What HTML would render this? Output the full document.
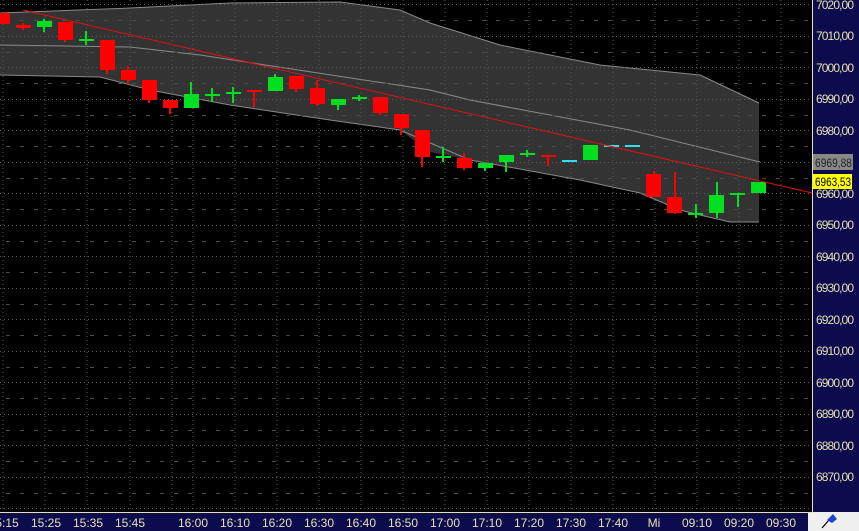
<!DOCTYPE html>
<html><head><style>
html,body{margin:0;padding:0;background:#000;}
svg{display:block;font-family:"Liberation Sans",sans-serif;}
</style></head><body>
<svg width="859" height="531" xmlns="http://www.w3.org/2000/svg">
<rect width="859" height="531" fill="#000"/>
<polygon fill="#333333" points="0,13 130,8 230,3 340,2 400,10 430,23 500,45 600,65 700,75 759,103 759,222 730,222 700,215 680,210 640,193 580,180 470,160 430,152 400,130 330,120 230,105 150,90 100,77 0,75"/>
<polyline fill="none" stroke="#8a8a8a" stroke-width="1" points="0,13 130,8 230,3 340,2 400,10 430,23 500,45 600,65 700,75 759,103"/>
<polyline fill="none" stroke="#8a8a8a" stroke-width="1" points="0,75 100,77 150,90 230,105 330,120 400,130 470,160 580,180 640,193 680,210 700,215 730,222 759,222"/>
<polyline fill="none" stroke="#8a8a8a" stroke-width="1" points="0,45 130,47 200,55 430,90 470,100 630,130 760,162"/>
<g stroke="#5a5a5a" stroke-width="1" stroke-dasharray="1,3">
<line x1="3" y1="0" x2="3" y2="512"/><line x1="45" y1="0" x2="45" y2="512"/><line x1="87" y1="0" x2="87" y2="512"/><line x1="130" y1="0" x2="130" y2="512"/><line x1="172" y1="0" x2="172" y2="512"/><line x1="193" y1="0" x2="193" y2="512"/><line x1="235" y1="0" x2="235" y2="512"/><line x1="277" y1="0" x2="277" y2="512"/><line x1="319" y1="0" x2="319" y2="512"/><line x1="361" y1="0" x2="361" y2="512"/><line x1="403" y1="0" x2="403" y2="512"/><line x1="445" y1="0" x2="445" y2="512"/><line x1="487" y1="0" x2="487" y2="512"/><line x1="529" y1="0" x2="529" y2="512"/><line x1="571" y1="0" x2="571" y2="512"/><line x1="613" y1="0" x2="613" y2="512"/><line x1="655" y1="0" x2="655" y2="512"/><line x1="697" y1="0" x2="697" y2="512"/><line x1="739" y1="0" x2="739" y2="512"/><line x1="781" y1="0" x2="781" y2="512"/>
</g>
<g stroke="#5a5a5a" stroke-width="1">
<g stroke-dasharray="1,3">
<line x1="0" y1="4.5" x2="812" y2="4.5"/><line x1="0" y1="36.5" x2="812" y2="36.5"/><line x1="0" y1="67.5" x2="812" y2="67.5"/><line x1="0" y1="99.5" x2="812" y2="99.5"/><line x1="0" y1="130.5" x2="812" y2="130.5"/><line x1="0" y1="162.5" x2="812" y2="162.5"/><line x1="0" y1="193.5" x2="812" y2="193.5"/><line x1="0" y1="225.5" x2="812" y2="225.5"/><line x1="0" y1="256.5" x2="812" y2="256.5"/><line x1="0" y1="288.5" x2="812" y2="288.5"/><line x1="0" y1="319.5" x2="812" y2="319.5"/><line x1="0" y1="351.5" x2="812" y2="351.5"/><line x1="0" y1="382.5" x2="812" y2="382.5"/><line x1="0" y1="414.5" x2="812" y2="414.5"/><line x1="0" y1="445.5" x2="812" y2="445.5"/><line x1="0" y1="477.5" x2="812" y2="477.5"/><line x1="0" y1="508.5" x2="812" y2="508.5"/>
</g>
<g stroke-dasharray="4,10" stroke="#4a4a4a">
<line x1="6" y1="20.5" x2="812" y2="20.5"/><line x1="6" y1="52.5" x2="812" y2="52.5"/><line x1="6" y1="83.5" x2="812" y2="83.5"/><line x1="6" y1="115.5" x2="812" y2="115.5"/><line x1="6" y1="146.5" x2="812" y2="146.5"/><line x1="6" y1="178.5" x2="812" y2="178.5"/><line x1="6" y1="209.5" x2="812" y2="209.5"/><line x1="6" y1="241.5" x2="812" y2="241.5"/><line x1="6" y1="272.5" x2="812" y2="272.5"/><line x1="6" y1="304.5" x2="812" y2="304.5"/><line x1="6" y1="335.5" x2="812" y2="335.5"/><line x1="6" y1="367.5" x2="812" y2="367.5"/><line x1="6" y1="398.5" x2="812" y2="398.5"/><line x1="6" y1="430.5" x2="812" y2="430.5"/><line x1="6" y1="461.5" x2="812" y2="461.5"/><line x1="6" y1="493.5" x2="812" y2="493.5"/>
</g>
</g>
<g stroke-width="2">
<g fill="#ff0000" stroke="#ff0000">
<rect x="0" y="13" width="10" height="11" stroke="none"/>
<line x1="23" y1="23" x2="23" y2="30"/><rect x="16" y="25" width="15" height="3" stroke="none"/>
<rect x="58" y="22" width="15" height="18" stroke="none"/><line x1="65" y1="40" x2="65" y2="42"/>
<rect x="100" y="40" width="15" height="30" stroke="none"/><line x1="107" y1="70" x2="107" y2="74"/>
<rect x="121" y="70" width="15" height="10" stroke="none"/><line x1="128" y1="66" x2="128" y2="83"/>
<rect x="142" y="80" width="15" height="20" stroke="none"/><line x1="149" y1="100" x2="149" y2="103"/>
<rect x="163" y="100" width="15" height="8" stroke="none"/><line x1="170" y1="108" x2="170" y2="114"/>
<line x1="247" y1="91" x2="262" y2="91"/><line x1="254" y1="91" x2="254" y2="107"/>
<rect x="289" y="76" width="15" height="13" stroke="none"/><line x1="296" y1="89" x2="296" y2="92"/>
<rect x="310" y="88" width="15" height="16" stroke="none"/><line x1="317" y1="80" x2="317" y2="106"/>
<rect x="373" y="97" width="15" height="16" stroke="none"/><line x1="380" y1="113" x2="380" y2="115"/>
<rect x="394" y="114" width="15" height="14" stroke="none"/><line x1="401" y1="128" x2="401" y2="135"/>
<rect x="415" y="130" width="15" height="27" stroke="none"/><line x1="422" y1="157" x2="422" y2="167"/>
<rect x="457" y="158" width="15" height="10" stroke="none"/><line x1="464" y1="153" x2="464" y2="170"/>
<line x1="541" y1="156" x2="556" y2="156"/><line x1="548" y1="156" x2="548" y2="166"/>
<rect x="646" y="174" width="15" height="23" stroke="none"/><line x1="654" y1="171" x2="654" y2="197"/>
<rect x="667" y="197" width="15" height="16" stroke="none"/><line x1="675" y1="172" x2="675" y2="214"/>
</g>
<g fill="#00e020" stroke="#00e020">
<rect x="37" y="21" width="15" height="6" stroke="none"/><line x1="44" y1="19" x2="44" y2="32"/>
<line x1="79" y1="40" x2="94" y2="40"/><line x1="86" y1="31" x2="86" y2="45"/>
<rect x="184" y="94" width="15" height="14" stroke="none"/><line x1="191" y1="82" x2="191" y2="94"/>
<line x1="205" y1="95" x2="220" y2="95"/><line x1="212" y1="88" x2="212" y2="102"/>
<line x1="226" y1="93" x2="241" y2="93"/><line x1="233" y1="87" x2="233" y2="103"/>
<rect x="268" y="77" width="15" height="14" stroke="none"/><line x1="275" y1="74" x2="275" y2="77"/>
<rect x="331" y="99" width="15" height="6" stroke="none"/><line x1="338" y1="105" x2="338" y2="110"/>
<line x1="352" y1="98" x2="367" y2="98"/><line x1="359" y1="95" x2="359" y2="101"/>
<line x1="436" y1="157" x2="451" y2="157"/><line x1="443" y1="147" x2="443" y2="162"/>
<rect x="478" y="163" width="15" height="5" stroke="none"/><line x1="485" y1="163" x2="485" y2="171"/>
<rect x="499" y="155" width="15" height="7" stroke="none"/><line x1="506" y1="162" x2="506" y2="172"/>
<line x1="520" y1="154" x2="535" y2="154"/><line x1="527" y1="150" x2="527" y2="157"/>
<rect x="583" y="145" width="15" height="15" stroke="none"/>
<line x1="688" y1="214" x2="703" y2="214"/><line x1="696" y1="204" x2="696" y2="218"/>
<rect x="709" y="195" width="15" height="18" stroke="none"/><line x1="717" y1="182" x2="717" y2="218"/>
<line x1="730" y1="194" x2="745" y2="194"/><line x1="738" y1="194" x2="738" y2="207"/>
<rect x="751" y="182" width="15" height="11" stroke="none"/>
</g>
<g stroke="#33ddee">
<line x1="562" y1="161" x2="577" y2="161"/><line x1="604" y1="146" x2="619" y2="146"/><line x1="625" y1="146" x2="640" y2="146"/>
</g>
</g>
<line x1="23" y1="10" x2="812" y2="193" stroke="#e01010" stroke-width="1"/>
<rect x="813" y="0" width="46" height="512" fill="#0b0b4e"/>
<line x1="812.5" y1="0" x2="812.5" y2="512" stroke="#e8e0b0"/>
<rect x="808" y="512" width="51" height="19" fill="#f0f0f0"/>
<path d="M822 528 L829 520" stroke="#000" stroke-width="1.2"/><path d="M827 520 L833 514 L837 519 L832 523 Z" fill="#2040d0"/>
<g fill="#e8e0b0" font-size="12" lengthAdjust="spacingAndGlyphs">
<text x="816" y="9" textLength="38">7020,00</text><text x="816" y="40" textLength="38">7010,00</text><text x="816" y="72" textLength="38">7000,00</text><text x="816" y="103" textLength="38">6990,00</text><text x="816" y="135" textLength="38">6980,00</text><text x="816" y="198" textLength="38">6960,00</text><text x="816" y="229" textLength="38">6950,00</text><text x="816" y="261" textLength="38">6940,00</text><text x="816" y="292" textLength="38">6930,00</text><text x="816" y="324" textLength="38">6920,00</text><text x="816" y="355" textLength="38">6910,00</text><text x="816" y="387" textLength="38">6900,00</text><text x="816" y="418" textLength="38">6890,00</text><text x="816" y="450" textLength="38">6880,00</text><text x="816" y="481" textLength="38">6870,00</text>
</g>
<rect x="813" y="154" width="40" height="16" fill="#888"/>
<text x="815" y="167" font-size="12" fill="#222" textLength="37" lengthAdjust="spacingAndGlyphs">6969,88</text>
<rect x="813" y="174" width="39" height="15" fill="#ffff00"/>
<text x="815" y="186" font-size="12" fill="#000" textLength="36" lengthAdjust="spacingAndGlyphs">6963,53</text>
<rect x="0" y="513" width="808" height="18" fill="#0b0b4e"/>
<line x1="0" y1="512.5" x2="812" y2="512.5" stroke="#e8e0b0"/>
<g fill="#e8e0b0" font-size="12" text-anchor="middle">
<text x="7" y="527">5:15</text><text x="46" y="527">15:25</text><text x="88" y="527">15:35</text><text x="130" y="527">15:45</text><text x="193" y="527">16:00</text><text x="235" y="527">16:10</text><text x="277" y="527">16:20</text><text x="319" y="527">16:30</text><text x="361" y="527">16:40</text><text x="403" y="527">16:50</text><text x="445" y="527">17:00</text><text x="487" y="527">17:10</text><text x="529" y="527">17:20</text><text x="571" y="527">17:30</text><text x="613" y="527">17:40</text><text x="654" y="527">Mi</text><text x="697" y="527">09:10</text><text x="739" y="527">09:20</text><text x="781" y="527">09:30</text>
</g>
</svg>
</body></html>
